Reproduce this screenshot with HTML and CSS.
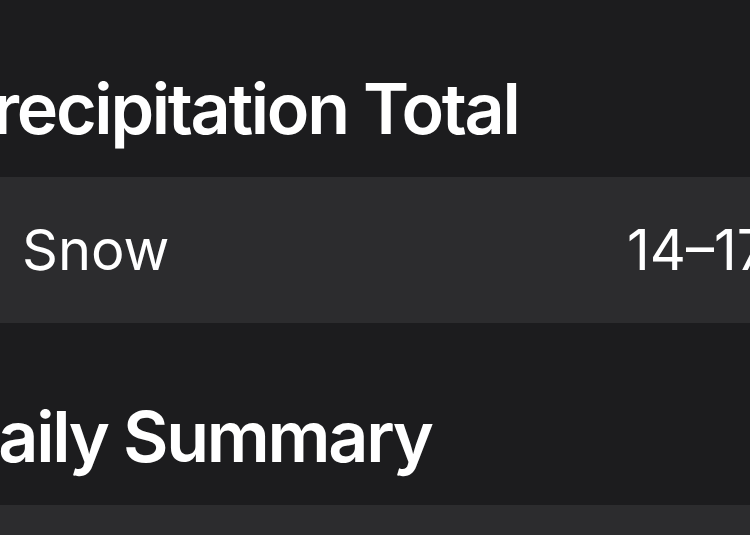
FILE: index.html
```html
<!DOCTYPE html>
<html lang="en">
<head>
    <meta charset="UTF-8">
    <title>Weather Details</title>
    <link rel="stylesheet" href="styles.css">
</head>
<body>
    <div id="page">
        <!-- Precipitation -->
        <h2 class="section-title">Precipitation Total</h2>
        <div class="list">
            <div class="row">
                <span class="row-label">Snow</span>
                <span class="row-value">14–17″</span>
            </div>
        </div>

        <!-- Daily summary -->
        <h2 class="section-title">Daily Summary</h2>
        <div class="list">
            <div class="row"></div>
        </div>
    </div>
</body>
</html>
```

FILE: styles.css
```css
body {
    margin: 0;
    padding: 0;
    overflow: hidden;
    width: 750px;
    height: 535px;
    font-family: Inter, "Noto Sans", sans-serif;
    background-color: #1c1c1e;
    color: #fff;
}

#page {
    padding-top: 62px;
}

.section-title {
    margin: 0 0 0 -50px;
    height: 115px;
    font-size: 70px;
    font-weight: 600;
    line-height: 94px;
    letter-spacing: -2.3px;
    white-space: nowrap;
}

.list {
    background-color: #2c2c2e;
    margin-bottom: 67px;
}

.row {
    display: flex;
    align-items: center;
    height: 146px;
    padding-left: 22px;
    font-size: 56px;
    white-space: nowrap;
}

.row-label {
    flex: 0 0 605px;
}

.row-value {
    flex-shrink: 0;
}
```
